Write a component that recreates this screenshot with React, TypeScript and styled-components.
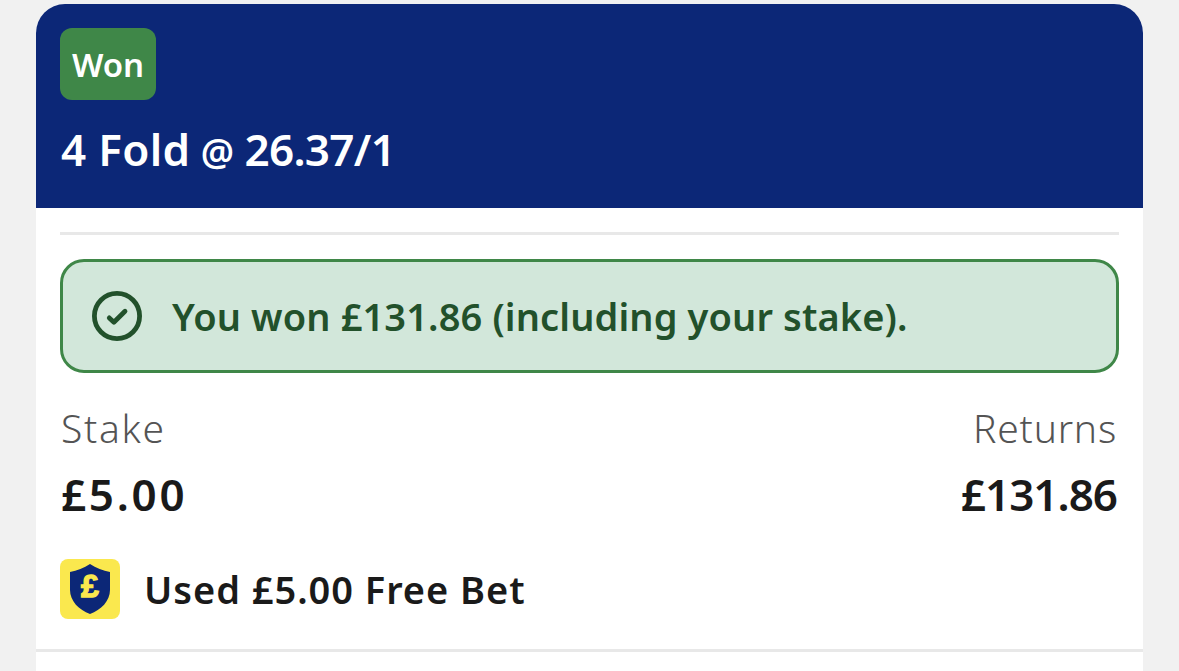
import React from 'react';
import styled, { createGlobalStyle } from 'styled-components';

const navy = '#0c2777';
const green = '#3f8748';
const green_dark = '#22512b';
const green_light = '#d2e7da';
const yellow = '#fae84e';
const black = '#1a1a1a';
const grey_100 = '#f1f1f1';
const grey_200 = '#e8e8e8';
const grey_600 = '#545454';

interface TextProps {
  $size: number;
  $line: number;
  $color: string;
  $weight?: number;
  $spacing?: number;
}

interface FigureProps {
  label: string;
  labelSpacing: number;
  amount: string;
  amountSpacing: number;
  alignEnd?: boolean;
}

const GlobalStyle = createGlobalStyle`
  * {
    box-sizing: border-box;
  }

  body {
    margin: 0;
    background-color: ${grey_100};
    font-family: 'Noto Sans', 'Open Sans', sans-serif;
    -webkit-font-smoothing: antialiased;
    overflow: hidden;
  }
`;

const Text = styled.span<TextProps>`
  display: block;
  font-size: ${({$size}) => $size}px;
  line-height: ${({$line}) => $line}px;
  font-weight: ${({$weight}) => $weight ?? 600};
  letter-spacing: ${({$spacing}) => $spacing ?? 0}px;
  color: ${({$color}) => $color};
  white-space: nowrap;
`;

const Page = styled.main`
  height: 671px;
  padding: 4px 36px 0;
  overflow: hidden;
`;

const Card = styled.article`
  display: flex;
  flex-direction: column;
  height: 667px;
  border-radius: 29px 29px 0 0;
  background-color: #fff;
  overflow: hidden;
`;

const CardHeader = styled.header`
  display: flex;
  flex-direction: column;
  align-items: flex-start;
  gap: 19px;
  height: 204px;
  padding: 24px;
  background-color: ${navy};
`;

const StatusBadge = styled.div`
  display: flex;
  justify-content: center;
  width: 96px;
  height: 72px;
  border-radius: 12px;
  background-color: ${green};
`;

const BetTitle = styled.div`
  display: flex;
  align-items: baseline;
  gap: 10.5px;
  padding-left: 1px;
`;

const CardBody = styled.section`
  display: flex;
  flex-direction: column;
  padding: 24px 24px 30px;
`;

const Divider = styled.hr`
  width: 100%;
  height: 3px;
  margin: 0;
  border: 0;
  background-color: ${grey_200};
`;

const WonMessage = styled.div`
  display: flex;
  align-items: center;
  gap: 30px;
  height: 114px;
  margin-top: 24px;
  padding: 0 29px;
  border: 3px solid ${green};
  border-radius: 24px;
  background-color: ${green_light};
`;

const Figures = styled.div`
  display: flex;
  justify-content: space-between;
  margin-top: 31px;
  padding: 0 2px 0 1px;
`;

const FigureWrapper = styled.div<{ $alignEnd?: boolean }>`
  display: flex;
  flex-direction: column;
  align-items: ${({$alignEnd}) => ($alignEnd ? 'flex-end' : 'flex-start')};
  gap: 12px;
`;

const FreeBet = styled.div`
  display: flex;
  align-items: center;
  gap: 24px;
  height: 60px;
  margin-top: 35px;
`;

const CheckIcon = () => (
  <svg width="50" height="50" viewBox="0 0 50 50" fill="none" stroke={green_dark}>
    <circle cx="25" cy="25" r="22.6" strokeWidth="4.8" />
    <path d="M17.3 26.9l4.6 4.3L33 20.3" strokeWidth="4.8" strokeLinecap="round" strokeLinejoin="round" />
  </svg>
);

const FreeBetIcon = () => (
  <svg width="60" height="60" viewBox="0 0 60 60">
    <rect width="60" height="60" rx="8" fill={yellow} />
    <path
      d="M30 5C36 9 43 11.5 50 13V31C50 42 41 51 30 55C19 51 10 42 10 31V13C17 11.5 24 9 30 5Z"
      fill={navy}
    />
    <text
      x="30"
      y="38.4"
      textAnchor="middle"
      fontSize="32"
      fontWeight="700"
      fontFamily="Liberation Sans"
      fill={yellow}
      stroke={yellow}
      strokeWidth="1.3"
    >
      £
    </text>
  </svg>
);

const Figure = ({label, labelSpacing, amount, amountSpacing, alignEnd}: FigureProps) => (
  <FigureWrapper $alignEnd={alignEnd}>
    <Text $size={39} $line={48} $color={grey_600} $weight={300} $spacing={labelSpacing}>{label}</Text>
    <Text $size={44} $line={60} $color={black} $spacing={amountSpacing}>{amount}</Text>
  </FigureWrapper>
);

export default function App() {
  return (
    <>
      <GlobalStyle />
      <Page>
        <Card>
          <CardHeader>
            <StatusBadge>
              <Text $size={33} $line={74} $color="#fff">Won</Text>
            </StatusBadge>
            <BetTitle>
              <Text $size={44} $line={60} $color="#fff" $spacing={0.3}>4 Fold</Text>
              <Text $size={37} $line={60} $color="#fff">@</Text>
              <Text $size={44} $line={60} $color="#fff" $spacing={-0.7}>26.37/1</Text>
            </BetTitle>
          </CardHeader>
          <CardBody>
            <Divider />
            <WonMessage>
              <CheckIcon />
              <Text $size={38} $line={62} $color={green_dark} $spacing={0.12}>
                You won £131.86 (including your stake).
              </Text>
            </WonMessage>
            <Figures>
              <Figure label="Stake" labelSpacing={1.7} amount="£5.00" amountSpacing={2.7} />
              <Figure label="Returns" labelSpacing={0.8} amount="£131.86" amountSpacing={-1} alignEnd />
            </Figures>
            <FreeBet>
              <FreeBetIcon />
              <Text $size={38} $line={62} $color={black} $spacing={0.95}>Used £5.00 Free Bet</Text>
            </FreeBet>
          </CardBody>
          <Divider />
        </Card>
      </Page>
    </>
  );
}
